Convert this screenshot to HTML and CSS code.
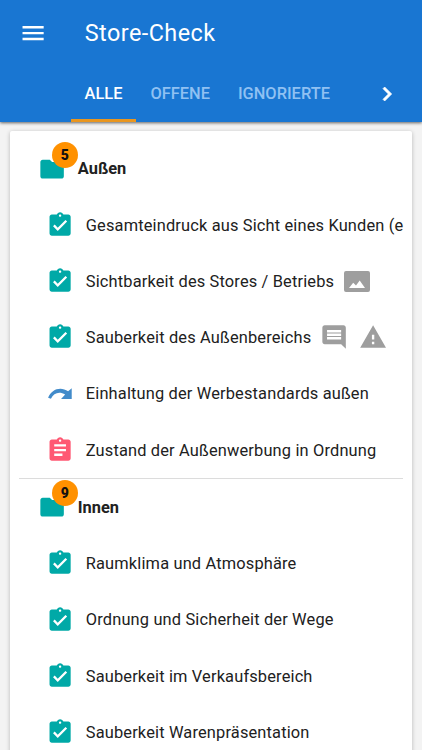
FILE: index.html
```
<!DOCTYPE html>
<html lang="de">
<head>
<meta charset="utf-8">
<title>Store-Check</title>
<link rel="stylesheet" href="styles.css">
</head>
<body>
<svg class="defs" aria-hidden="true">
  <symbol id="done" viewBox="0 0 24 24"><path fill-rule="evenodd" d="M19 3h-4.18C14.4 1.84 13.3 1 12 1s-2.4.84-2.82 2H5c-1.1 0-2 .9-2 2v14c0 1.100.9 2 2 2h14c1.100 0 2-.9 2-2V5c0-1.100-.9-2-2-2zm-7 0c.55 0 1 .45 1 1s-.45 1-1 1-1-.45-1-1 .45-1 1-1zm-2 14-4-4 1.410-1.410L10 14.170l6.590-6.590L18 9l-8 8z"/></symbol>
  <symbol id="todo" viewBox="0 0 24 24"><path fill-rule="evenodd" d="M19 3h-4.180C14.400 1.840 13.300 1 12 1s-2.400.840-2.820 2H5c-1.100 0-2 .9-2 2v14c0 1.100.9 2 2 2h14c1.100 0 2-.9 2-2V5c0-1.100-.9-2-2-2zm-7 0c.55 0 1 .45 1 1s-.45 1-1 1-1-.45-1-1 .45-1 1-1zm2 14H7v-2h7v2zm3-4H7v-2h10v2zm0-4H7V7h10v2z"/></symbol>
  <symbol id="folder" viewBox="0 0 24 24"><path d="M10 4H4c-1.100 0-2 .9-2 2v12c0 1.100.9 2 2 2h16c1.100 0 2-.9 2-2V8c0-1.100-.9-2-2-2h-8z"/></symbol>
  <symbol id="skip" viewBox="0 0 24 24"><path d="M1.800 15.200C4.500 7.800 12.500 5.100 18.800 9.600L21.900 7V16.100H12.800L16.300 12.400C11.800 9.400 6.500 10.600 4.200 16Z"/></symbol>
  <symbol id="comment" viewBox="0 0 24 24"><path d="M21.990 4c0-1.100-.89-2-1.990-2H4c-1.100 0-2 .9-2 2v12c0 1.100.9 2 2 2h14l4 4-.010-18zM18 14H6v-2h12v2zm0-3H6V9h12v2zm0-3H6V6h12v2z"/></symbol>
  <symbol id="warning" viewBox="0 0 24 24"><path d="M1 21h22L12 2 1 21zm12-3h-2v-2h2v2zm0-4h-2v-4h2v4z"/></symbol>
  <symbol id="image" viewBox="0 0 26 21"><path fill-rule="evenodd" d="M2 0h22q2 0 2 2v17q0 2-2 2H2q-2 0-2-2V2Q0 0 2 0zM5 17h16l-5.300-7.500-3.700 5-2.800-2.700z"/></symbol>
</svg>
<header class="appbar">
  <div class="toolbar">
    <svg class="menu" viewBox="0 0 24 24"><path d="M3 18h18v-2H3v2zm0-5h18v-2H3v2zm0-7v2h18V6H3z"/></svg>
    <h1 class="title">Store-Check</h1>
  </div>
  <nav class="tabs">
    <a class="tab active">ALLE</a>
    <a class="tab">OFFENE</a>
    <a class="tab">IGNORIERTE</a>
    <svg class="next" viewBox="0 0 24 24"><path d="M10 6 8.590 7.410 13.170 12l-4.580 4.590L10 18l6-6z"/></svg>
  </nav>
</header>
<main class="card">
  <section class="group">
    <h2 class="row head"><span class="folder"><svg class="icon"><use href="#folder"/></svg><b class="badge">5</b></span>Außen</h2>
    <div class="row"><svg class="icon teal"><use href="#done"/></svg><span class="label">Gesamteindruck aus Sicht eines Kunden (e</span></div>
    <div class="row"><svg class="icon teal"><use href="#done"/></svg><span class="label">Sichtbarkeit des Stores / Betriebs</span><svg class="picture"><use href="#image"/></svg></div>
    <div class="row"><svg class="icon teal"><use href="#done"/></svg><span class="label">Sauberkeit des Außenbereichs</span><svg class="icon note"><use href="#comment"/></svg><svg class="icon warn"><use href="#warning"/></svg></div>
    <div class="row"><svg class="icon blue"><use href="#skip"/></svg><span class="label">Einhaltung der Werbestandards außen</span></div>
    <div class="row"><svg class="icon red"><use href="#todo"/></svg><span class="label">Zustand der Außenwerbung in Ordnung</span></div>
  </section>
  <hr class="divider">
  <section class="group">
    <h2 class="row head"><span class="folder"><svg class="icon"><use href="#folder"/></svg><b class="badge">9</b></span>Innen</h2>
    <div class="row"><svg class="icon teal"><use href="#done"/></svg><span class="label">Raumklima und Atmosphäre</span></div>
    <div class="row"><svg class="icon teal"><use href="#done"/></svg><span class="label">Ordnung und Sicherheit der Wege</span></div>
    <div class="row"><svg class="icon teal"><use href="#done"/></svg><span class="label">Sauberkeit im Verkaufsbereich</span></div>
    <div class="row"><svg class="icon teal"><use href="#done"/></svg><span class="label">Sauberkeit Warenpräsentation</span></div>
  </section>
</main>
</body>
</html>
```
FILE: styles.css
```
* { box-sizing: border-box; }

body {
  margin: 0;
  height: 750px;
  overflow: hidden;
  background: #f3f3f3;
  color: #212121;
  font: 16.4px Roboto, sans-serif;
}

.defs { display: none; }
svg { display: block; flex: none; fill: currentColor; }

.appbar {
  height: 122px;
  background: #1976d2;
  color: #fff;
  box-shadow: 0 1px 3px rgba(0, 0, 0, .6);
}

.toolbar { display: flex; align-items: center; height: 66px; padding-left: 19px; }
.menu { width: 28.2px; height: 28.2px; }
.title { margin: 0 0 0 37.6px; font-size: 23.4px; font-weight: 400; letter-spacing: .44px; }

.tabs { display: flex; height: 56px; padding-left: 70.6px; }
.tab {
  display: flex;
  align-items: center;
  padding: 1px 14px 0;
  border-bottom: 3px solid transparent;
  font-weight: 500;
  color: #90c1f2;
}
.tab.active { color: #fff; border-color: #e9961f; }
.next { width: 28px; height: 28px; margin: 14px 0 0 28.6px; stroke: #fff; stroke-width: .6px; }

.card {
  height: 640px;
  margin: 9px 10px 0;
  padding-top: 9.7px;
  background: #fff;
  border-radius: 2px;
  box-shadow: 0 1px 4px rgba(0, 0, 0, .25);
}

.row {
  display: flex;
  align-items: center;
  height: 56.25px;
  padding-left: 36.1px;
  white-space: nowrap;
}
.icon { width: 28.2px; height: 28.2px; }
.label { margin-left: 11.5px; letter-spacing: .16px; }

.head { margin: 0; padding-left: 27.6px; font-size: 16.4px; font-weight: 700; }
.folder { position: relative; margin-right: 12px; color: #00a9a7; }
.badge {
  position: absolute;
  left: 14.2px;
  top: -12.9px;
  width: 26px;
  height: 26px;
  border-radius: 50%;
  background: #ff9100;
  color: #111;
  font-size: 14px;
  line-height: 26px;
  text-align: center;
}

.teal { color: #00a9a7; }
.blue { color: #428bca; }
.red { color: #ff5873; }
.picture { width: 26px; height: 21px; margin-left: 10px; color: #9e9e9e; }
.note { margin-left: 8.5px; color: #9e9e9e; }
.warn { margin-left: 11.5px; color: #9e9e9e; }

.divider { height: 1px; margin: 0 9px; border: 0; background: #dcdcdc; }
```
